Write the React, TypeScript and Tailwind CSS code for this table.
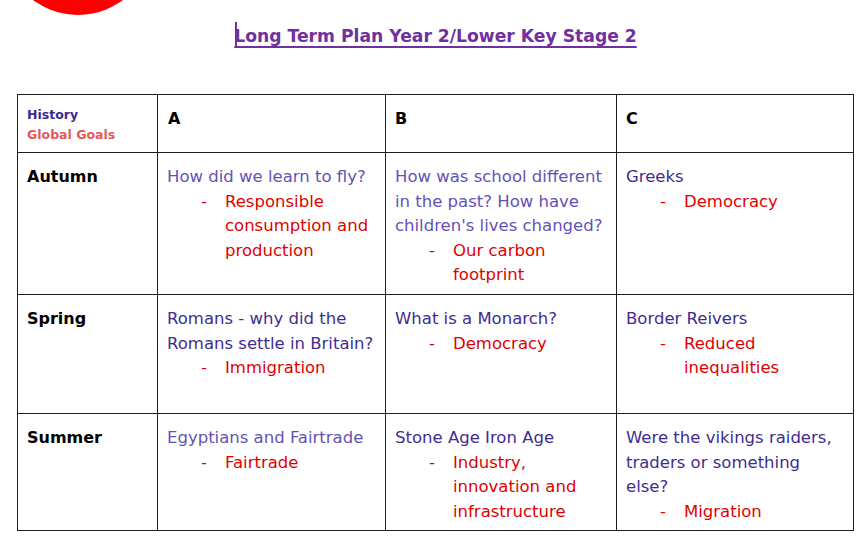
import React from "react";

const DARK = "text-[#3f2d90]";
const LIGHT = "text-[#6352b5]";

function Lines({ lines }: { lines: string[] }) {
  return (
    <>
      {lines.map((l, i) => (
        <React.Fragment key={i}>
          {i > 0 && <br />}
          {l}
        </React.Fragment>
      ))}
    </>
  );
}

function Bullet({ lines }: { lines: string[] }) {
  return (
    <div className="flex text-[#e00000]">
      <span className="ml-[34px] w-[24px] shrink-0">-</span>
      <span className="whitespace-nowrap">
        <Lines lines={lines} />
      </span>
    </div>
  );
}

function Cell({ q, qc, bullet, last }: { q: string[]; qc: string; bullet: string[]; last?: boolean }) {
  return (
    <div className={`border-b border-[#1e1e1e] ${last ? "" : "border-r"} pl-[9px] pt-[12px]`}>
      <div className={`${qc} whitespace-nowrap`}>
        <Lines lines={q} />
      </div>
      <Bullet lines={bullet} />
    </div>
  );
}

function Season({ name }: { name: string }) {
  return (
    <div className="border-b border-r border-[#1e1e1e] pl-[9px] pt-[12px] font-bold text-[16px] text-black">
      {name}
    </div>
  );
}

export default function App() {
  return (
    <div
      className="relative w-[862px] h-[539px] bg-white overflow-hidden text-[16.5px] leading-[24.5px]"
      style={{ fontFamily: '"DejaVu Sans", "Liberation Sans", sans-serif' }}
    >
      <div className="absolute left-[3px] top-[-135px] w-[150px] h-[150px] rounded-full bg-[#ff0000]" />
      <div className="flex justify-center pl-[9px] pt-[22px] h-[94px]">
        <div className="relative h-[28px]">
          <div className="absolute left-[1px] top-[0px] w-[2px] h-[26px] bg-[#7030a0]" />
          <span className="font-bold text-[17.2px] leading-[28px] text-[#7030a0] underline decoration-[2px] underline-offset-[4px] whitespace-nowrap">
            Long Term Plan Year 2/Lower Key Stage 2
          </span>
        </div>
      </div>
      <div className="ml-[17px] w-fit grid grid-cols-[140px_228px_231px_236px] grid-rows-[58px_142px_119px_117px] border-t border-l border-r border-[#1e1e1e]">
        <div className="border-b border-r border-[#1e1e1e] pl-[9px] pt-[10px] font-bold text-[12.5px] leading-[20px]">
          <div className="text-[#3b2a8f]">History</div>
          <div className="text-[#e35a5a]">Global Goals</div>
        </div>
        <div className="border-b border-r border-[#1e1e1e] pl-[10px] pt-[12px] font-bold text-[16px] text-black">A</div>
        <div className="border-b border-r border-[#1e1e1e] pl-[9px] pt-[12px] font-bold text-[16px] text-black">B</div>
        <div className="border-b border-[#1e1e1e] pl-[9px] pt-[12px] font-bold text-[16px] text-black">C</div>

        <Season name="Autumn" />
        <Cell q={["How did we learn to fly?"]} qc={LIGHT} bullet={["Responsible", "consumption and", "production"]} />
        <Cell
          q={["How was school different", "in the past? How have", "children's lives changed?"]}
          qc={LIGHT}
          bullet={["Our carbon", "footprint"]}
        />
        <Cell q={["Greeks"]} qc={DARK} bullet={["Democracy"]} last />

        <Season name="Spring" />
        <Cell q={["Romans - why did the", "Romans settle in Britain?"]} qc={DARK} bullet={["Immigration"]} />
        <Cell q={["What is a Monarch?"]} qc={DARK} bullet={["Democracy"]} />
        <Cell q={["Border Reivers"]} qc={DARK} bullet={["Reduced", "inequalities"]} last />

        <Season name="Summer" />
        <Cell q={["Egyptians and Fairtrade"]} qc={LIGHT} bullet={["Fairtrade"]} />
        <Cell q={["Stone Age Iron Age"]} qc={DARK} bullet={["Industry,", "innovation and", "infrastructure"]} />
        <Cell
          q={["Were the vikings raiders,", "traders or something", "else?"]}
          qc={DARK}
          bullet={["Migration"]}
          last
        />
      </div>
    </div>
  );
}
